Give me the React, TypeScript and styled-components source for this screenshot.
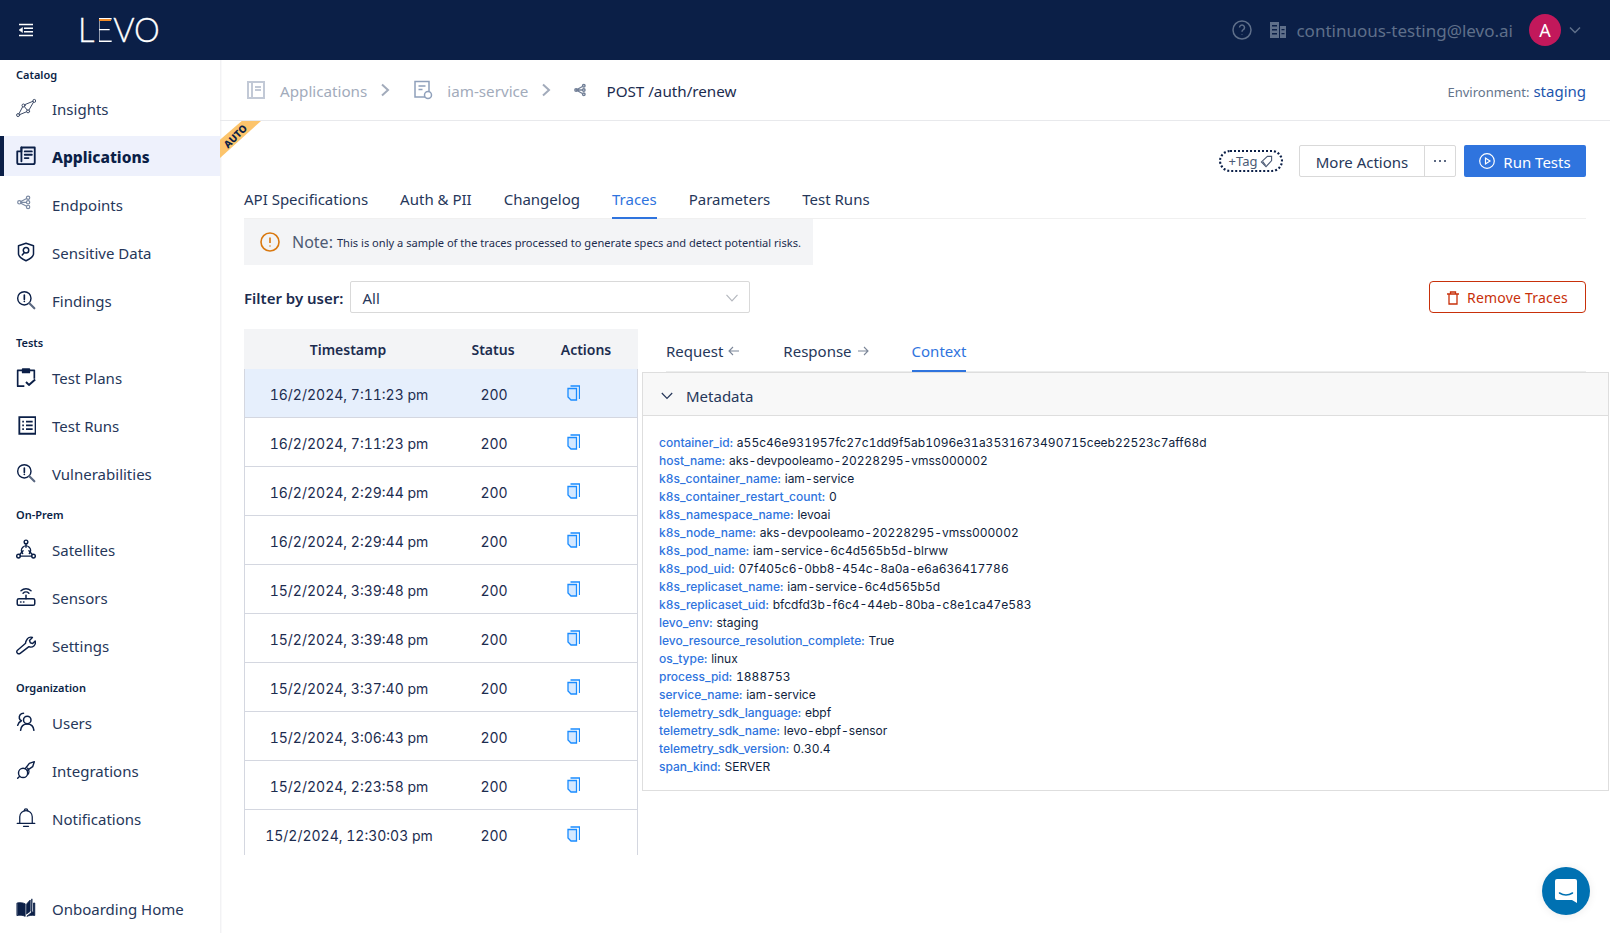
import React from 'react';
import styled, { createGlobalStyle } from 'styled-components';

const GlobalStyle = createGlobalStyle`
  html, body { margin: 0; padding: 0; height: 100%; background: #fff; }
  body { font-family: "Noto Sans", "Liberation Sans", sans-serif; color: #1c2c4f; overflow: hidden; }
  * { box-sizing: border-box; }
`;

const NAVY = '#0b1f47';

const Page = styled.div`
  width: 1610px;
  height: 933px;
  display: flex;
  flex-direction: column;
  position: relative;
  overflow: hidden;
`;

const TopBar = styled.header`
  height: 60px;
  flex: none;
  background: ${NAVY};
  display: flex;
  align-items: center;
  padding: 0 29px 0 18px;
`;

const MenuButton = styled.div`
  width: 16px;
  height: 14px;
  display: flex;
  margin-right: 44px;
`;

const Logo = styled.div`
  font-family: "Lato", "Inter", sans-serif;
  font-weight: 300;
  font-size: 32.5px;
  line-height: 1;
  color: #fff;
  display: flex;
  -webkit-text-stroke: 0.3px #fff;
`;

/* the E of the wordmark has no stem and an orange top bar */
const LogoE = styled.span`
  position: relative;
  background: linear-gradient(90deg, ${NAVY} 0 5px, #fff 5px);
  -webkit-background-clip: text;
  background-clip: text;
  color: transparent;
  -webkit-text-stroke: 0;

  &::after {
    content: '';
    position: absolute;
    left: 5px;
    top: 5px;
    width: 12px;
    height: 2px;
    background: #f28c28;
  }
`;

const TopRight = styled.div`
  margin-left: auto;
  display: flex;
  align-items: center;
  color: #5f6f8a;
`;

const BuildingIcon = styled.svg`
  margin-left: 18px;
`;

const Email = styled.span`
  font-size: 17px;
  margin: 0 16px 0 10px;
`;

const Avatar = styled.div`
  width: 32px;
  height: 32px;
  border-radius: 50%;
  background: #c2185b;
  color: #fff;
  font-size: 18px;
  display: flex;
  align-items: center;
  justify-content: center;
  margin-right: 8px;
`;

const Body = styled.div`
  flex: 1;
  display: flex;
  min-height: 0;
`;

const Sidebar = styled.nav`
  width: 220px;
  flex: none;
  box-shadow: 1px 0 0 #f2f2f4, 2px 0 0 #f9f9fa;
  display: flex;
  flex-direction: column;
  padding-top: 8px;
`;

const SectionLabel = styled.div<{ $first?: boolean }>`
  font-size: 11px;
  font-weight: 600;
  line-height: 14px;
  color: ${NAVY};
  padding-left: 16px;
  margin: ${({ $first }) => ($first ? '0 0 6px' : '7.5px 0 7px')};
`;

const NavRow = styled.div<{ $active?: boolean }>`
  height: 40px;
  flex: none;
  display: flex;
  align-items: center;
  gap: 16px;
  font-size: ${({ $active }) => ($active ? '15.5px' : '15px')};
  margin-bottom: 8px;
  color: ${({ $active }) => ($active ? NAVY : '#26375a')};
  font-weight: ${({ $active }) => ($active ? 800 : 400)};
  background: ${({ $active }) => ($active ? '#eef1fc' : 'transparent')};
  border-left: ${({ $active }) => ($active ? `4px solid ${NAVY}` : 'none')};
  padding-left: ${({ $active }) => ($active ? '12px' : '16px')};
`;

const NavLabel = styled.span`
  line-height: 22px;
  padding-top: 2px;
`;

const NavIcon = styled.svg`
  width: 20px;
  height: 20px;
  flex: none;
  fill: none;
  stroke: ${NAVY};
  stroke-width: 1.7;
  stroke-linecap: round;
  stroke-linejoin: round;
`;

const BottomNav = styled.div`
  margin-top: auto;
  margin-bottom: -3px;
`;

const Main = styled.main`
  flex: 1;
  min-width: 0;
  display: flex;
  flex-direction: column;
  position: relative;
`;

const Breadcrumb = styled.div`
  height: 61px;
  flex: none;
  border-bottom: 1px solid #e8e9ec;
  display: flex;
  align-items: center;
  padding: 0 24px 0 26px;
  font-size: 15.2px;
`;

const Crumb = styled.span<{ $current?: boolean }>`
  color: ${({ $current }) => ($current ? '#1c2c4f' : '#a2abbb')};
  margin-left: ${({ $current }) => ($current ? '18px' : '14px')};
  padding-top: 2px;
`;

const CrumbSep = styled.svg`
  width: 10px;
  height: 14px;
  margin: 0 23px 0 13px;
  fill: none;
  stroke: #a2abbb;
  stroke-width: 2;
`;

const CrumbIcon = styled.svg<{ $small?: boolean }>`
  width: ${({ $small }) => ($small ? '14px' : '20px')};
  height: 20px;
  flex: none;
  fill: none;
  stroke: #c2c9d6;
  stroke-width: 2;
`;

const EnvBlock = styled.div`
  margin-left: auto;
  font-size: 13px;
  color: #64748b;
  display: flex;
  align-items: baseline;
  gap: 4px;
  padding-top: 2px;
`;

const EnvValue = styled.span`
  font-size: 15px;
  color: #1c55ad;
`;

const Ribbon = styled.div`
  position: absolute;
  left: 0;
  top: 61px;
  width: 41px;
  height: 37px;
  background: #fcc46c;
  clip-path: polygon(0 51%, 53% 0, 100% 0, 0 100%);
`;

const RibbonText = styled.span`
  position: absolute;
  left: 1px;
  top: 70px;
  font-size: 10px;
  line-height: 12px;
  font-weight: 800;
  color: ${NAVY};
  transform: rotate(-45deg);
`;

const ActionRow = styled.div`
  height: 32px;
  flex: none;
  margin-top: 24px;
  padding-right: 24px;
  display: flex;
  justify-content: flex-end;
  align-items: center;
`;

const TagPill = styled.div`
  width: 64px;
  height: 22px;
  border: 2px dotted ${NAVY};
  border-radius: 11px;
  font-size: 13px;
  color: #4b5a75;
  display: flex;
  align-items: center;
  justify-content: center;
  gap: 3px;
  margin-right: 16px;
`;

const SplitButton = styled.div`
  width: 157px;
  height: 32px;
  display: flex;
  border: 1px solid #d9d9d9;
  border-radius: 2px;
  margin-right: 8px;
  font-size: 15px;
`;

const SplitMain = styled.div`
  flex: 1;
  display: flex;
  align-items: center;
  justify-content: center;
  color: #26375a;
  padding-top: 2px;
`;

const SplitDots = styled.div`
  width: 31px;
  border-left: 1px solid #d9d9d9;
  display: flex;
  align-items: center;
  justify-content: center;
  gap: 3px;
`;

const Dot = styled.i`
  width: 2px;
  height: 2px;
  background: #26375a;
  border-radius: 50%;
`;

const PrimaryButton = styled.div`
  width: 122px;
  height: 32px;
  background: #2f74de;
  color: #fff;
  border-radius: 2px;
  font-size: 15px;
  display: flex;
  align-items: center;
  justify-content: center;
  gap: 8px;
`;

const ButtonText = styled.span`
  padding-top: 2px;
`;

const TabRow = styled.div`
  display: flex;
  flex: none;
  gap: 32px;
  margin: 0 24px;
  border-bottom: 1px solid #f0f0f0;
  height: 42px;
`;

const Tab = styled.div<{ $active?: boolean }>`
  font-size: 15px;
  line-height: 24px;
  padding-top: 10px;
  height: 42px;
  display: flex;
  align-items: flex-start;
  gap: 5px;
  color: ${({ $active }) => ($active ? '#2f74de' : '#26375a')};
  box-shadow: ${({ $active }) => ($active ? 'inset 0 -2px 0 #2f74de' : 'none')};
`;

const Note = styled.div`
  flex: none;
  width: 569px;
  height: 46px;
  margin-left: 24px;
  background: #f3f4f6;
  display: flex;
  align-items: center;
  padding-left: 16px;
`;

const NoteLabel = styled.span`
  font-size: 16px;
  color: #4e5b73;
  margin: 0 4px 0 12px;
`;

const NoteText = styled.span`
  font-size: 11.1px;
  white-space: nowrap;
  color: #1c2c4f;
`;

const FilterRow = styled.div`
  flex: none;
  display: flex;
  align-items: center;
  margin: 16px 24px 0;
  height: 32px;
`;

const FilterLabel = styled.label`
  font-size: 15px;
  font-weight: 600;
  color: #1c2c4f;
  margin-right: 7px;
  padding-top: 1px;
`;

const Select = styled.div`
  width: 400px;
  height: 32px;
  border: 1px solid #d9d9d9;
  border-radius: 2px;
  font-size: 15px;
  padding: 1px 11px 0;
  display: flex;
  align-items: center;
  justify-content: space-between;
  color: #26375a;
`;

const DangerButton = styled.div`
  margin-left: auto;
  width: 157px;
  height: 32px;
  border: 1px solid #c8300a;
  border-radius: 4px;
  color: #c8300a;
  font-size: 14px;
  letter-spacing: 0.2px;
  padding-top: 1px;
  display: flex;
  align-items: center;
  justify-content: center;
  gap: 8px;
`;

const Split = styled.div`
  flex: 1;
  min-height: 0;
  display: flex;
  gap: 4px;
  margin: 16px 0 0 24px;
`;

const TableWrap = styled.div`
  width: 394px;
  height: 526px;
  flex: none;
  overflow: hidden;
`;

const Row = styled.div<{ $selected?: boolean }>`
  display: grid;
  grid-template-columns: 208px 82px 1fr;
  height: 49px;
  padding-top: 2px;
  align-items: center;
  text-align: center;
  font-family: "Inter", sans-serif;
  font-size: 14px;
  font-variant-numeric: tabular-nums;
  color: #1c2c4f;
  border: 1px solid #d4d7e0;
  border-width: 0 1px 1px;
  background: ${({ $selected }) => ($selected ? '#e6effc' : '#fff')};
`;

const HeadRow = styled.div`
  display: grid;
  grid-template-columns: 208px 82px 1fr;
  height: 40px;
  align-items: center;
  text-align: center;
  background: #f3f4f6;
  font-size: 14px;
  font-weight: 600;
  color: #1c2c4f;
`;

const CopyCell = styled.div`
  display: flex;
  padding-left: 32px;
  margin-top: -3px;
`;

const DetailCol = styled.div`
  flex: 1;
  min-width: 0;
`;

const DetailTabs = styled.div`
  height: 43px;
  margin: 0 24px;
  display: flex;
  gap: 43px;
  border-bottom: 1px solid #eceded;
`;

const DetailTab = styled(Tab)`
  height: 43px;
`;

const ArrowIcon = styled.svg`
  margin-top: 7px;
  fill: none;
  stroke: #7b8698;
  stroke-width: 1.1;
`;

const Panel = styled.section`
  border: 1px solid #dedede;
  margin-right: 1px;
  height: 419px;
`;

const PanelHead = styled.div`
  height: 43px;
  background: #f8f8f8;
  border-bottom: 1px solid #dedede;
  display: flex;
  align-items: center;
  gap: 13px;
  padding: 3px 0 0 18px;
  font-size: 15px;
  color: #26375a;
`;

const PanelBody = styled.div`
  padding: 18px 16px;
  font-family: "Inter", sans-serif;
  font-size: 12px;
  line-height: 18px;
  font-variant-numeric: tabular-nums;
  color: #0f1e3d;
`;

const MetaLine = styled.div`
  white-space: nowrap;
`;

const MetaKey = styled.span`
  color: #2f74de;
  font-weight: 500;
  margin-right: 4px;
`;

const Chat = styled.div`
  position: absolute;
  left: 1542px;
  top: 867px;
  width: 48px;
  height: 48px;
  border-radius: 50%;
  background: #0071b2;
  display: flex;
  align-items: center;
  justify-content: center;
  box-shadow: 0 1px 8px rgba(0, 0, 0, 0.08);
`;

type IconName =
  | 'insights' | 'apps' | 'endpoints' | 'shield' | 'finding' | 'plans' | 'runs'
  | 'satellite' | 'sensor' | 'wrench' | 'users' | 'plug' | 'bell' | 'book';

const iconPaths: Record<IconName, React.ReactNode> = {
  insights: (
    <g strokeWidth="1.2" stroke="#3c4a66">
      <circle cx="2.500" cy="20.500" r="1.800" /><circle cx="9" cy="9" r="1.800" /><circle cx="14.500" cy="16" r="1.800" /><circle cx="22" cy="3.500" r="1.800" />
      <path d="M3.500 19 8 10.500M10.200 10.500l3.200 4M15.500 14.500l5.500-9.500M4.300 20l8.400-3.500M10.500 8l9.700-4" />
    </g>
  ),
  apps: (
    <g strokeWidth="2.200">
      <path d="M6.500 1.800h16v18a2 2 0 0 1-2 2H3.500a2 2 0 0 1-2-2V6.500h5z" />
      <path d="M6.500 1.800v16.500" />
      <path d="M10.500 6.500h8.500M10.500 10.500h8.500M10.500 14.500h4.500" />
    </g>
  ),
  endpoints: (
    <g stroke="#7b8aa3" strokeWidth="1.4" transform="translate(0 -2)">
      <circle cx="4" cy="12" r="2" /><circle cx="14.500" cy="6.500" r="2" /><circle cx="14.500" cy="12" r="2" /><circle cx="14.500" cy="17.500" r="2" />
      <path d="M6 12h6.500M5.800 11 12.800 7.400M5.800 13l7 3.600" />
    </g>
  ),
  shield: (
    <g strokeWidth="1.800">
      <path d="M12 1.500 21 4.500V14c0 3.500-4.500 6.500-9 8.500-4.500-2-9-5-9-8.500V4.500z" />
      <circle cx="12" cy="10" r="3.300" />
      <path d="m9.800 12.800-2.300 2.700" />
    </g>
  ),
  finding: (
    <g strokeWidth="1.700">
      <circle cx="10" cy="10" r="8" />
      <path d="M10 6v5M10 13.500v.3" strokeWidth="2" />
      <path d="m16 16 6 6" strokeWidth="2.600" stroke="#5a6880" />
    </g>
  ),
  plans: (
    <g strokeWidth="2" strokeLinecap="butt">
      <path d="M8 4H2v19h8M16 4h6v10" />
      <path d="M8 2.500h8v4H8z" fill={NAVY} />
      <path d="m12 18 3.500 3.500L23 15" strokeWidth="2.400" />
    </g>
  ),
  runs: (
    <g strokeWidth="2.200" strokeLinecap="butt" strokeLinejoin="miter">
      <path d="M4 2.500h19.500v20H4z" />
      <path d="M7.500 8h2M12 8h8M7.500 12.500h2M12 12.500h8M7.500 17h2M12 17h8" />
    </g>
  ),
  satellite: (
    <g strokeWidth="1.700">
      <circle cx="12" cy="3.500" r="2.200" /><circle cx="3" cy="20.500" r="2.200" /><circle cx="21" cy="20.500" r="2.200" />
      <path d="M12 5.700V10M8.500 14 4.500 18.500M15.500 14l4 4.500M5.200 20.500h13.600" />
      <path d="M8 17.500a5.500 5.500 0 1 1 8 0" />
    </g>
  ),
  sensor: (
    <g strokeWidth="1.800">
      <rect x="1.500" y="14" width="21" height="8" rx="2" />
      <path d="M12 14v-4M5.500 18h.5M9 18h.5" />
      <path d="M8.500 7.500a5 5 0 0 1 7 0M6 4.500a9 9 0 0 1 12 0" />
    </g>
  ),
  wrench: (
    <path d="M12.700 6.300a5.500 5.500 0 0 1 7-3.300l-3.500 3.500 1 2.800 2.800 1 3-3a5.500 5.500 0 0 1-7.500 6.700L5 22a2.500 2.500 0 0 1-3.500-3.500l10-8.500a5.500 5.500 0 0 1 1.200-3.700z" />
  ),
  users: (
    <g strokeWidth="1.800">
      <circle cx="13.500" cy="9.500" r="4.500" />
      <path d="M5.500 22c.5-4.500 3.500-7.500 8-7.500s7.500 3 8 7.500" />
      <path d="M9 1.500C5.500 1.500 3.500 4.500 4 7.500 4.300 9 5.500 10 6.500 10.500 4.500 11.500 2.500 13.500 2 16" />
    </g>
  ),
  plug: (
    <g strokeWidth="1.700">
      <circle cx="8.500" cy="15.500" r="5.500" />
      <path d="M11 10.500 16 4l6-2-2 6-6.500 4.500M4.500 19.500 2 22M14 17.500a5.500 5.500 0 0 0 0-7.500" />
    </g>
  ),
  bell: (
    <g strokeWidth="1.500">
      <path d="M4.500 18V10.500a7.500 7.500 0 0 1 15 0V18" />
      <path d="M1.500 18.500h21M10 3a2 2 0 0 1 4 0M9 22h6" />
    </g>
  ),
  book: (
    <g fill={NAVY} strokeWidth="1">
      <path d="M1.500 6c3-.800 6.500-.500 9.500 1v15c-3-1.500-6.500-1.800-9.500-1z" />
      <path d="M13 7c1.200-1.500 2.500-3 4-4.500V16l-4 3z" />
      <path d="M19 1.500V17l-6 5c3-1.200 6.500-1.500 9.500-1V6h-1.500v10l-2 1.500z" />
    </g>
  ),
};

const Icon: React.FC<{ name: IconName }> = ({ name }) => (
  <NavIcon viewBox="0 0 24 24">{iconPaths[name]}</NavIcon>
);

const CopyIcon = () => (
  <svg width="13" height="16" viewBox="0 0 13 16" fill="none" stroke="#1a8cff">
    <path d="M3.500 1h9v13" strokeWidth="1.300" />
    <path d="M1 3.500h8.500v11.500H4l-3-3z" strokeWidth="1.300" fill="#d4e8ff" />
  </svg>
);

const Chevron = () => (
  <CrumbSep viewBox="0 0 10 14"><path d="m2 1.500 6 5.500-6 5.500" /></CrumbSep>
);

type NavItem = { icon: IconName; label: string; active?: boolean };

const sections: { title: string; items: NavItem[] }[] = [
  {
    title: 'Catalog',
    items: [
      { icon: 'insights', label: 'Insights' },
      { icon: 'apps', label: 'Applications', active: true },
      { icon: 'endpoints', label: 'Endpoints' },
      { icon: 'shield', label: 'Sensitive Data' },
      { icon: 'finding', label: 'Findings' },
    ],
  },
  {
    title: 'Tests',
    items: [
      { icon: 'plans', label: 'Test Plans' },
      { icon: 'runs', label: 'Test Runs' },
      { icon: 'finding', label: 'Vulnerabilities' },
    ],
  },
  {
    title: 'On-Prem',
    items: [
      { icon: 'satellite', label: 'Satellites' },
      { icon: 'sensor', label: 'Sensors' },
      { icon: 'wrench', label: 'Settings' },
    ],
  },
  {
    title: 'Organization',
    items: [
      { icon: 'users', label: 'Users' },
      { icon: 'plug', label: 'Integrations' },
      { icon: 'bell', label: 'Notifications' },
    ],
  },
];

const traces = [
  '16/2/2024, 7:11:23 pm',
  '16/2/2024, 7:11:23 pm',
  '16/2/2024, 2:29:44 pm',
  '16/2/2024, 2:29:44 pm',
  '15/2/2024, 3:39:48 pm',
  '15/2/2024, 3:39:48 pm',
  '15/2/2024, 3:37:40 pm',
  '15/2/2024, 3:06:43 pm',
  '15/2/2024, 2:23:58 pm',
  '15/2/2024, 12:30:03 pm',
];

const metadata: [string, string][] = [
  ['container_id', 'a55c46e931957fc27c1dd9f5ab1096e31a3531673490715ceeb22523c7aff68d'],
  ['host_name', 'aks-devpooleamo-20228295-vmss000002'],
  ['k8s_container_name', 'iam-service'],
  ['k8s_container_restart_count', '0'],
  ['k8s_namespace_name', 'levoai'],
  ['k8s_node_name', 'aks-devpooleamo-20228295-vmss000002'],
  ['k8s_pod_name', 'iam-service-6c4d565b5d-blrww'],
  ['k8s_pod_uid', '07f405c6-0bb8-454c-8a0a-e6a636417786'],
  ['k8s_replicaset_name', 'iam-service-6c4d565b5d'],
  ['k8s_replicaset_uid', 'bfcdfd3b-f6c4-44eb-80ba-c8e1ca47e583'],
  ['levo_env', 'staging'],
  ['levo_resource_resolution_complete', 'True'],
  ['os_type', 'linux'],
  ['process_pid', '1888753'],
  ['service_name', 'iam-service'],
  ['telemetry_sdk_language', 'ebpf'],
  ['telemetry_sdk_name', 'levo-ebpf-sensor'],
  ['telemetry_sdk_version', '0.30.4'],
  ['span_kind', 'SERVER'],
];

const tabs = ['API Specifications', 'Auth & PII', 'Changelog', 'Traces', 'Parameters', 'Test Runs'];

export default function App() {
  return (
    <Page>
      <GlobalStyle />
      <TopBar>
        <MenuButton>
          <svg width="16" height="14" viewBox="0 0 16 14" fill="none" stroke="#fff" strokeWidth="1.500">
            <path d="M1 1.500h14M6 5.200h9M6 8.800h9M1 12.500h14" />
            <path d="M4.500 4.500v5L1 7z" fill="#fff" strokeWidth="0.500" />
          </svg>
        </MenuButton>
        <Logo>L<LogoE>E</LogoE>VO</Logo>
        <TopRight>
          <svg width="20" height="20" viewBox="0 0 20 20" fill="none" stroke="#5f6f8a" strokeWidth="1.500">
            <circle cx="10" cy="10" r="9" />
            <path d="M7.500 7.500a2.500 2.500 0 1 1 3.800 2.200c-.9.500-1.300 1-1.300 2" />
            <path d="M10 14v.5" />
          </svg>
          <BuildingIcon width="16" height="16" viewBox="0 0 16 16" fill="#5f6f8a">
            <path d="M0 0h9v16H0zM10 4h6v12h-6z" />
            <path d="M2 3h5v1.500H2zM2 7h5v1.500H2zM2 11h5v1.500H2zM11.500 7h3v1.200h-3zM11.500 11h3v1.200h-3z" fill={NAVY} />
          </BuildingIcon>
          <Email>continuous-testing@levo.ai</Email>
          <Avatar>A</Avatar>
          <svg width="12" height="8" viewBox="0 0 12 8" fill="none" stroke="#5f6f8a" strokeWidth="1.500">
            <path d="m1 1.500 5 5 5-5" />
          </svg>
        </TopRight>
      </TopBar>

      <Body>
        <Sidebar>
          {sections.map((section, i) => (
            <React.Fragment key={section.title}>
              <SectionLabel $first={i === 0}>{section.title}</SectionLabel>
              {section.items.map((item) => (
                <NavRow key={item.label} $active={item.active}>
                  <Icon name={item.icon} />
                  <NavLabel>{item.label}</NavLabel>
                </NavRow>
              ))}
            </React.Fragment>
          ))}
          <BottomNav>
            <NavRow>
              <Icon name="book" />
              <NavLabel>Onboarding Home</NavLabel>
            </NavRow>
          </BottomNav>
        </Sidebar>

        <Main>
          <Breadcrumb>
            <CrumbIcon viewBox="0 0 20 20"><path d="M2 2h16v16H2zM6 2v16M9 7h6M9 10h6" /></CrumbIcon>
            <Crumb>Applications</Crumb>
            <Chevron />
            <CrumbIcon viewBox="0 0 20 20">
              <path d="M2 1.500h14v15.500H2zM5.500 6h7M5.500 9.500h4" stroke="#8fa0bb" strokeWidth="1.500" />
              <circle cx="15" cy="15" r="3.500" stroke="#8fa0bb" strokeWidth="1.500" fill="#fff" />
            </CrumbIcon>
            <Crumb>iam-service</Crumb>
            <Chevron />
            <CrumbIcon viewBox="0 0 20 20" $small>
              <path d="M3 10h9M3 10l9-5M3 10l9 5" stroke="#6f7d95" />
              <circle cx="3" cy="10" r="1.800" stroke="#6f7d95" />
              <circle cx="14" cy="4" r="1.800" stroke="#6f7d95" />
              <circle cx="14" cy="10" r="1.800" stroke="#6f7d95" />
              <circle cx="14" cy="16" r="1.800" stroke="#6f7d95" />
            </CrumbIcon>
            <Crumb $current>POST /auth/renew</Crumb>
            <EnvBlock>Environment: <EnvValue>staging</EnvValue></EnvBlock>
          </Breadcrumb>
          <Ribbon />
          <RibbonText>AUTO</RibbonText>

          <ActionRow>
            <TagPill>
              +Tag
              <svg width="13" height="13" viewBox="0 0 14 14" fill="none" stroke="#4b5a75" strokeWidth="1.200">
                <path d="M8 1.500h4.500V6L6.500 12.500 1.500 7.500z" /><path d="M6 11 3 7" />
              </svg>
            </TagPill>
            <SplitButton>
              <SplitMain>More Actions</SplitMain>
              <SplitDots><Dot /><Dot /><Dot /></SplitDots>
            </SplitButton>
            <PrimaryButton>
              <svg width="16" height="16" viewBox="0 0 16 16" fill="none" stroke="#fff" strokeWidth="1.200">
                <circle cx="8" cy="8" r="7.300" /><path d="M6.500 5v6L11 8z" />
              </svg>
              <ButtonText>Run Tests</ButtonText>
            </PrimaryButton>
          </ActionRow>

          <TabRow>
            {tabs.map((t) => (
              <Tab key={t} $active={t === 'Traces'}>{t}</Tab>
            ))}
          </TabRow>

          <Note>
            <svg width="20" height="20" viewBox="0 0 20 20" fill="none" stroke="#d9780f" strokeWidth="1.600">
              <circle cx="10" cy="10" r="9" /><path d="M10 5.500v5.500M10 13.500v1" />
            </svg>
            <NoteLabel>Note:</NoteLabel>
            <NoteText>This is only a sample of the traces processed to generate specs and detect potential risks.</NoteText>
          </Note>

          <FilterRow>
            <FilterLabel>Filter by user:</FilterLabel>
            <Select>
              All
              <svg width="12" height="8" viewBox="0 0 12 8" fill="none" stroke="#b5b8bf" strokeWidth="1.200">
                <path d="m.5.800 5.500 6 5.500-6" />
              </svg>
            </Select>
            <DangerButton>
              <svg width="12" height="14" viewBox="0 0 12 14" fill="none" stroke="#c8300a" strokeWidth="1.300">
                <path d="M0 3h12M2 3v10h8V3M3.500 3V1h5v2" />
              </svg>
              Remove Traces
            </DangerButton>
          </FilterRow>

          <Split>
            <TableWrap>
              <HeadRow>
                <span>Timestamp</span>
                <span>Status</span>
                <span>Actions</span>
              </HeadRow>
              {traces.map((ts, i) => (
                <Row key={i} $selected={i === 0}>
                  <span>{ts}</span>
                  <span>200</span>
                  <CopyCell><CopyIcon /></CopyCell>
                </Row>
              ))}
            </TableWrap>

            <DetailCol>
              <DetailTabs>
                <DetailTab>
                  Request
                  <ArrowIcon width="12" height="10" viewBox="0 0 12 10"><path d="M11 5H1M5 1 1 5l4 4" /></ArrowIcon>
                </DetailTab>
                <DetailTab>
                  Response
                  <ArrowIcon width="12" height="10" viewBox="0 0 12 10"><path d="M1 5h10M7 1l4 4-4 4" /></ArrowIcon>
                </DetailTab>
                <DetailTab $active>Context</DetailTab>
              </DetailTabs>
              <Panel>
                <PanelHead>
                  <svg width="12" height="8" viewBox="0 0 12 8" fill="none" stroke="#26375a" strokeWidth="1.200">
                    <path d="m.8 1 5.200 5.500L11.200 1" />
                  </svg>
                  Metadata
                </PanelHead>
                <PanelBody>
                  {metadata.map(([k, v]) => (
                    <MetaLine key={k}><MetaKey>{k}:</MetaKey>{v}</MetaLine>
                  ))}
                </PanelBody>
              </Panel>
            </DetailCol>
          </Split>
        </Main>
      </Body>

      <Chat>
        <svg width="24" height="26" viewBox="0 0 24 26">
          <path d="M3 1h18a2 2 0 0 1 2 2v22l-5-3H3a2 2 0 0 1-2-2V3a2 2 0 0 1 2-2z" fill="#fff" />
          <path d="M5.500 15c4 2.500 9 2.500 13 0" fill="none" stroke="#0071b2" strokeWidth="1.500" strokeLinecap="round" />
        </svg>
      </Chat>
    </Page>
  );
}
